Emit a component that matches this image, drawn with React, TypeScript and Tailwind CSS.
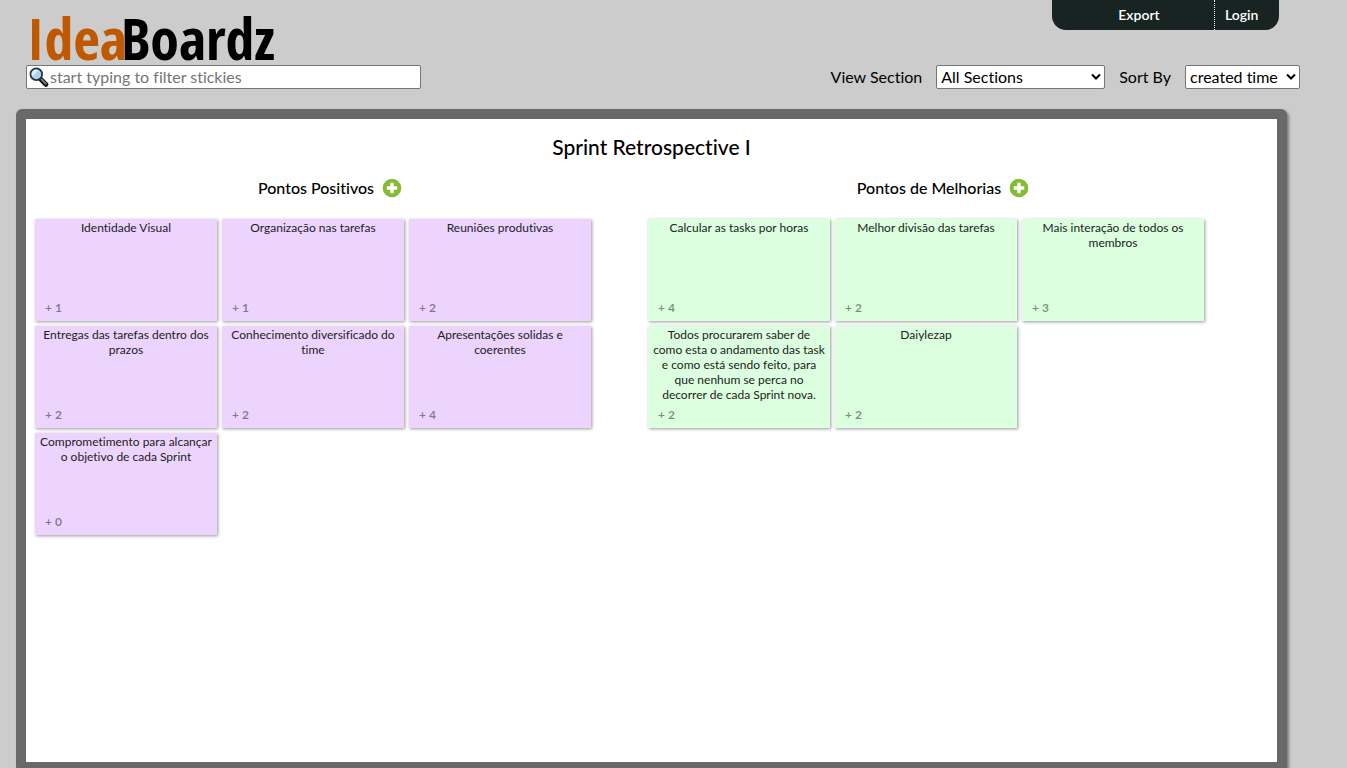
type Sticky = { text: string; votes: number };
type Section = { name: string; color: string; stickies: Sticky[] };

const sections: Section[] = [
  {
    name: "Pontos Positivos",
    color: "bg-[#ecd4ff]",
    stickies: [
      { text: "Identidade Visual", votes: 1 },
      { text: "Organização nas tarefas", votes: 1 },
      { text: "Reuniões produtivas", votes: 2 },
      { text: "Entregas das tarefas dentro dos prazos", votes: 2 },
      { text: "Conhecimento diversificado do time", votes: 2 },
      { text: "Apresentações solidas e coerentes", votes: 4 },
      { text: "Comprometimento para alcançar o objetivo de cada Sprint", votes: 0 },
    ],
  },
  {
    name: "Pontos de Melhorias",
    color: "bg-[#dbffdf]",
    stickies: [
      { text: "Calcular as tasks por horas", votes: 4 },
      { text: "Melhor divisão das tarefas", votes: 2 },
      { text: "Mais interação de todos os membros", votes: 3 },
      {
        text: "Todos procurarem saber de como esta o andamento das task e como está sendo feito, para que nenhum se perca no decorrer de cada Sprint nova.",
        votes: 2,
      },
      { text: "Daiylezap", votes: 2 },
    ],
  },
];

function MagnifierIcon() {
  return (
    <svg viewBox="0 0 20 20" className="h-5 w-5 shrink-0" aria-hidden="true">
      <path d="M11 11.5l6 6" stroke="#111" strokeWidth="4.6" strokeLinecap="round" />
      <path d="M12.5 12.5l4.300 4.300" stroke="#777" strokeWidth="2" strokeLinecap="round" />
      <circle cx="7.300" cy="7.300" r="5.800" fill="#a9d3f5" stroke="#26333d" strokeWidth="1.800" />
      <path d="M3.500 9.500a4.300 4.300 0 0 1 6-6z" fill="#d8efff" />
    </svg>
  );
}

function PlusIcon() {
  return (
    <svg viewBox="0 0 20 20" className="block h-5 w-5" aria-hidden="true">
      <circle cx="10" cy="10" r="9.300" fill="#84bd32" />
      <path d="M10 4.800v10.400M4.800 10h10.400" stroke="#fff" strokeWidth="3.400" />
    </svg>
  );
}

function Chevron() {
  return (
    <svg viewBox="0 0 10 8" className="pointer-events-none absolute top-2 right-1 h-2 w-[10px]" aria-hidden="true">
      <path d="M1 1.500l4 4 4-4" fill="none" stroke="#000" strokeWidth="2" />
    </svg>
  );
}

function StickyCard({ sticky, color }: { sticky: Sticky; color: string }) {
  return (
    <li className={`flex h-[102px] w-[182px] flex-col justify-between pt-px shadow-[1px_1px_3px_rgba(0,0,0,0.4)] ${color}`}>
      <p className="px-1 text-center text-[12px] leading-[15px] text-[#222]">{sticky.text}</p>
      <button type="button" className="self-start px-[10px] pb-[5px] text-left text-[12px] leading-4 font-bold text-black/45">
        + {sticky.votes}
      </button>
    </li>
  );
}

export default function App() {
  return (
    <div className="flex min-h-screen flex-col overflow-hidden bg-[#ccc] pl-4 font-[Lato,sans-serif] text-black [font-variant-ligatures:none]">
      <header className="flex h-[65px] items-start justify-between pr-[68px] pl-[11px]">
        <a
          href="#"
          aria-label="IdeaBoardz"
          className="flex font-['Liberation_Sans_Narrow','Open_Sans_Condensed','Liberation_Sans',sans-serif] text-[58px] leading-[76px] font-bold"
        >
          <span className="relative z-10 text-[#c05800]">Idea</span>
          <span className="-ml-[6px]">Boardz</span>
        </a>
        <nav className="flex h-[30px] rounded-b-[14px] bg-[#182422] text-[14px] leading-[30px] font-semibold text-white">
          <a href="#" className="w-[162px] pl-3 text-center">Export</a>
          <a href="#" className="w-[65px] border-l border-dotted border-white pl-[10px]">Login</a>
        </nav>
      </header>

      <div className="flex h-6 items-center justify-between pr-[47px] pl-[10px] text-[16px]">
        <label className="flex h-6 w-[395px] items-center rounded-[2px] border border-[#767676] bg-white pl-[2px]">
          <MagnifierIcon />
          <input
            type="text"
            aria-label="Filter stickies"
            placeholder="start typing to filter stickies"
            className="min-w-0 flex-1 pl-px text-[16px] outline-none placeholder:text-[#757575]"
          />
        </label>
        <div className="flex items-center gap-[14px]">
          <label htmlFor="view-section">View Section</label>
          <span className="relative w-[169px]">
            <select id="view-section" className="block h-6 w-full appearance-none rounded-[2px] border border-[#767676] bg-white pl-1 text-[16px] leading-[20px]">
              <option>All Sections</option>
            </select>
            <Chevron />
          </span>
          <label htmlFor="sort-by">Sort By</label>
          <span className="relative w-[115px]">
            <select id="sort-by" className="block h-6 w-full appearance-none rounded-[2px] border border-[#767676] bg-white pl-1 text-[16px] leading-[20px]">
              <option>created time</option>
            </select>
            <Chevron />
          </span>
        </div>
      </div>

      <main className="mt-5 mr-[60px] -mb-1 flex-1 rounded-[6px] border-[10px] border-[#696969] bg-white shadow-[2px_2px_3px_rgba(0,0,0,0.4)]">
        <h1 className="pt-3 text-center text-[21px] leading-8 font-medium">Sprint Retrospective I</h1>
        <div className="grid grid-cols-2 gap-[23px] pt-[13px] pr-[39px] pl-[9px]">
          {sections.map((section) => (
            <section key={section.name}>
              <div className="flex h-6 items-center justify-center gap-2">
                <h2 className="text-[16px] leading-6 font-medium">{section.name}</h2>
                <button type="button" aria-label={`Add sticky to ${section.name}`}>
                  <PlusIcon />
                </button>
              </div>
              <ul className="mt-[19px] flex flex-wrap gap-[5px]">
                {section.stickies.map((sticky) => (
                  <StickyCard key={sticky.text} sticky={sticky} color={section.color} />
                ))}
              </ul>
            </section>
          ))}
        </div>
      </main>
    </div>
  );
}
